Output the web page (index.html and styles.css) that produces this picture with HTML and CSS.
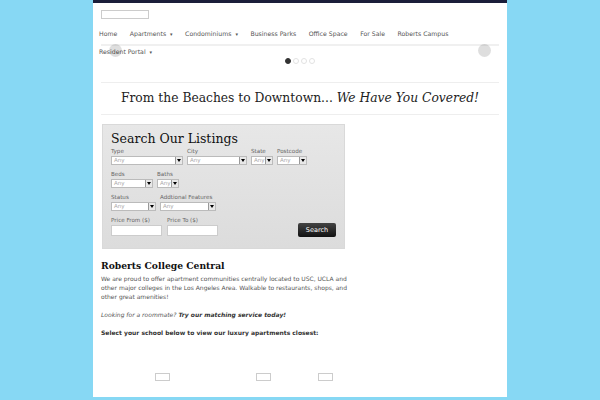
FILE: index.html
```html
<!DOCTYPE html>
<html>
<head>
<meta charset="utf-8">
<link rel="stylesheet" href="styles.css">
</head>
<body>
<div class="page">
  <div class="logo"></div>
  <nav class="nav">
    <span class="nav-item">Home</span>
    <span class="nav-item">Apartments <span class="caret">▾</span></span>
    <span class="nav-item">Condominiums <span class="caret">▾</span></span>
    <span class="nav-item">Business Parks</span>
    <span class="nav-item">Office Space</span>
    <span class="nav-item">For Sale</span>
    <span class="nav-item">Roberts Campus</span>
    <span class="nav-item">Resident Portal <span class="caret">▾</span></span>
  </nav>
  <div class="slider">
    <div class="slider-line"></div>
    <span class="arrow arrow-left"></span>
    <span class="arrow arrow-right"></span>
    <div class="dots"><span class="dot on"></span><span class="dot"></span><span class="dot"></span><span class="dot"></span></div>
  </div>
  <h2 class="tagline">From the Beaches to Downtown... <em>We Have You Covered!</em></h2>
  <div class="search">
    <h3 class="search-title">Search Our Listings</h3>
    <div class="row">
      <label class="field"><span>Type</span><span class="sel w72">Any<i></i></span></label>
      <label class="field"><span>City</span><span class="sel w60">Any<i></i></span></label>
      <label class="field"><span>State</span><span class="sel w22">Any<i></i></span></label>
      <label class="field"><span>Postcode</span><span class="sel w30">Any<i></i></span></label>
    </div>
    <div class="row">
      <label class="field"><span>Beds</span><span class="sel w42">Any<i></i></span></label>
      <label class="field"><span>Baths</span><span class="sel w22">Any<i></i></span></label>
    </div>
    <div class="row">
      <label class="field"><span>Status</span><span class="sel w46">Any<i></i></span></label>
      <label class="field"><span>Addtional Features</span><span class="sel w56">Any<i></i></span></label>
    </div>
    <div class="row last">
      <label class="field"><span>Price From ($)</span><span class="inp"></span></label>
      <label class="field"><span>Price To ($)</span><span class="inp"></span></label>
      <span class="btn">Search</span>
    </div>
  </div>
  <h3 class="section-title">Roberts College Central</h3>
  <p class="text">We are proud to offer apartment communities centrally located to USC, UCLA and other major colleges in the Los Angeles Area. Walkable to restaurants, shops, and other great amenities!</p>
  <p class="text"><em>Looking for a roommate? <strong>Try our matching service today!</strong></em></p>
  <p class="text bold">Select your school below to view our luxury apartments closest:</p>
  <div class="schools">
    <span class="sbox b1"></span>
    <span class="sbox b2"></span>
    <span class="sbox b3"></span>
  </div>
</div>
</body>
</html>
```
FILE: styles.css
```css
html, body { margin: 0; padding: 0; }
body {
  background: #87d8f4;
  font-family: "DejaVu Sans", sans-serif;
  color: #555;
}
.page {
  width: 414px;
  margin-left: 93px;
  min-height: 397px;
  background: #fff;
  border-top: 3px solid #1b1e3a;
  padding: 7px 8px 0 8px;
  box-sizing: border-box;
}
.logo {
  width: 46px;
  height: 7px;
  border: 1px solid #ccc;
}
.nav {
  position: relative;
  z-index: 1;
  display: flex;
  flex-wrap: wrap;
  font-size: 6.2px;
  color: #555;
  margin: 10px 0 0 -2px;
  row-gap: 8px;
  column-gap: 12.5px;
  line-height: 9px;
}
.caret { font-size: 5px; margin-left: 2px; }
.slider {
  position: relative;
  margin-top: -18.5px;
}
.slider-line {
  margin: 5px 0 0 0;
  height: 2px;
  background: #f0f0f0;
}
.arrow {
  position: absolute;
  top: 0;
  width: 13px;
  height: 13px;
  border-radius: 50%;
  background: rgba(0, 0, 0, 0.13);
  z-index: 2;
}
.arrow-left { left: 8px; }
.arrow-right { right: 8px; }
.dots {
  display: flex;
  gap: 2px;
  justify-content: center;
  margin-top: 12px;
}
.dot {
  width: 6px; height: 6px; border-radius: 50%;
  background: #fff; border: 1px solid #e2e2e2; box-sizing: border-box;
}
.dot.on { background: #333; border-color: #333; }
.tagline {
  font-family: "DejaVu Serif", serif;
  font-weight: normal;
  font-size: 12.3px;
  color: #222;
  text-align: center;
  margin: 18px 0 0 0;
  padding: 7px 0 8px;
  border-top: 1px solid #eee;
  border-bottom: 1px solid #eee;
  line-height: 16px;
}
.search {
  width: 243px;
  margin: 9px 0 0 1px;
  background: linear-gradient(#e7e7e7, #dcdcdc);
  border: 1px solid #d9d9d9;
  padding: 7px 8px 12px 8px;
  box-sizing: border-box;
  font-size: 5.6px;
  color: #666;
}
.search-title {
  font-family: "DejaVu Serif", serif;
  font-weight: normal;
  font-size: 12.5px;
  color: #111;
  margin: 0 0 2px;
  line-height: 14px;
}
.row { display: flex; gap: 4px; margin-bottom: 6px; align-items: flex-end; }
.row.last { margin-bottom: 0; gap: 5px; }
.field { display: flex; flex-direction: column; gap: 1px; line-height: 7px; }
.sel {
  position: relative;
  height: 9px;
  background: #fff;
  border: 1px solid #bbb;
  box-sizing: border-box;
  color: #aaa;
  font-size: 5.6px;
  line-height: 7px;
  padding-left: 2px;
}
.sel i {
  position: absolute; right: 0; top: 0; width: 6px; height: 7px;
  background: #e8e8e8; border-left: 1px solid #999;
}
.sel i::after {
  content: ""; position: absolute; left: 1px; top: 2px;
  border-left: 2px solid transparent; border-right: 2px solid transparent; border-top: 3px solid #000;
}
.w72 { width: 72px; } .w60 { width: 60px; } .w22 { width: 22px; } .w30 { width: 30px; }
.w42 { width: 42px; } .w46 { width: 45px; } .w56 { width: 56px; }
.inp { width: 51px; height: 11px; background: #fff; border: 1px solid #ccc; box-sizing: border-box; }
.btn {
  margin-left: auto;
  background: linear-gradient(#444, #111);
  color: #fff;
  font-size: 6.5px;
  border-radius: 2px;
  width: 38px; height: 14px; line-height: 14px; text-align: center;
  margin-bottom: -1px;
}
.section-title {
  font-family: "DejaVu Serif", serif;
  font-size: 9.2px;
  color: #111;
  margin: 11.5px 0 3px 0;
  line-height: 11px;
}
.text { font-size: 6px; line-height: 9px; color: #555; margin: 0 0 9px; width: 250px; }
.text strong { color: #333; }
.bold { font-weight: bold; color: #333; width: 300px; }
.schools { position: relative; height: 60px; margin-top: -9px; }
.sbox { position: absolute; top: 36px; width: 13px; height: 6px; border: 1px solid #ccc; }
.b1 { left: 54px; } .b2 { left: 155px; } .b3 { left: 217px; }
```
